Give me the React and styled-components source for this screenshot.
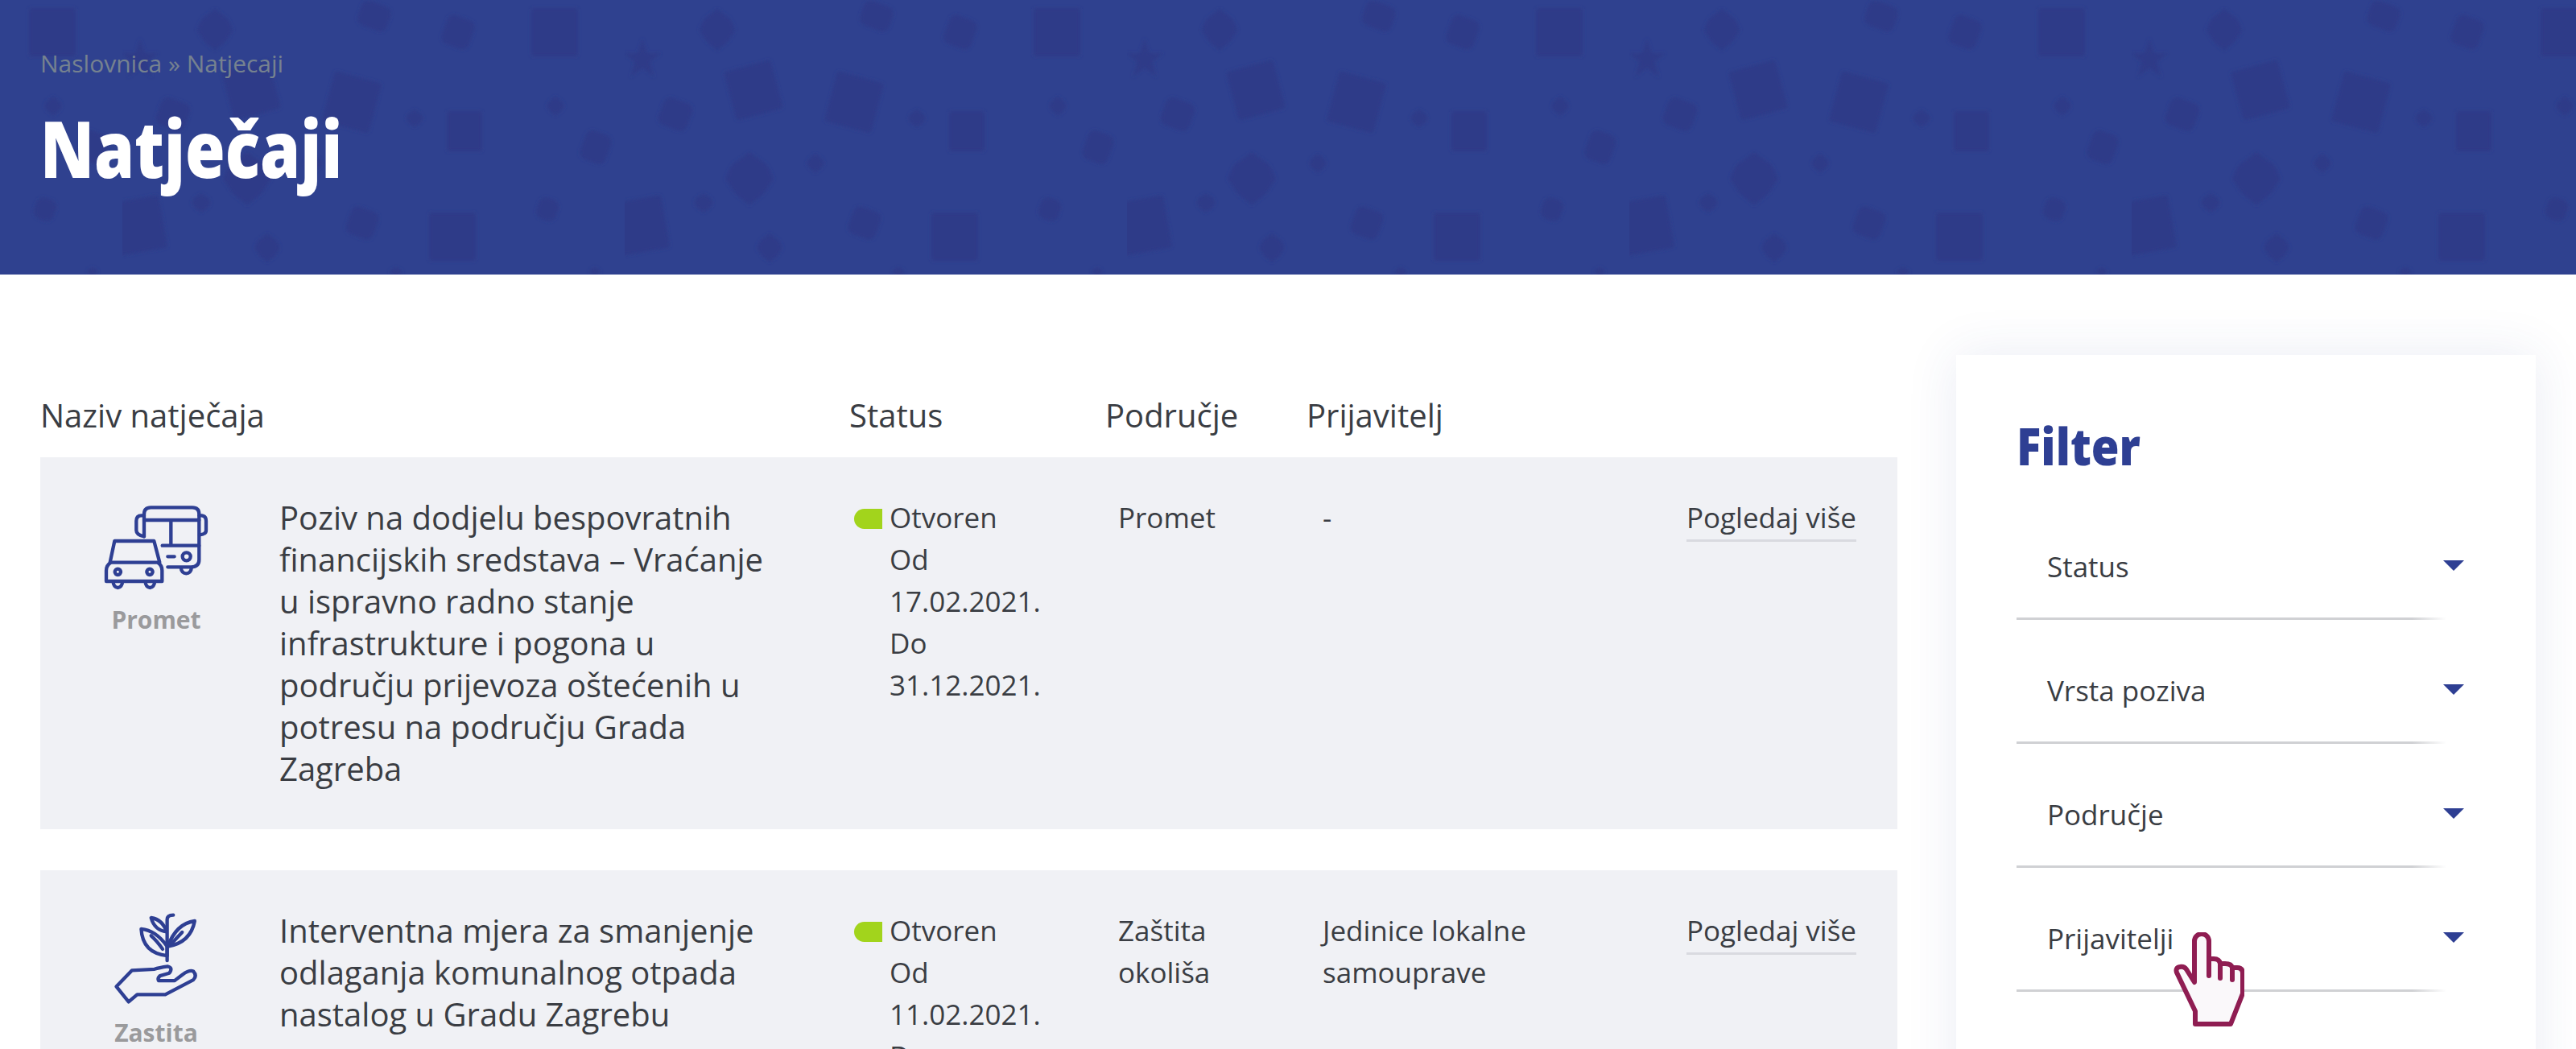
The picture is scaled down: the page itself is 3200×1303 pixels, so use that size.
import styled, { createGlobalStyle } from 'styled-components'

const GlobalStyle = createGlobalStyle`
	* {
		box-sizing: border-box;
	}
	html,
	body {
		margin: 0;
		height: 1303px;
		overflow: hidden;
		background: #fff;
		font-family: 'Open Sans', sans-serif;
		color: #3a3d43;
	}
`

const Hero = styled.header`
	position: relative;
	height: 341px;
	padding: 56px 50px 0;
	background: #2f418f;
	overflow: hidden;
`

const HeroPattern = styled.svg`
	position: absolute;
	inset: 0;
	width: 100%;
	height: 100%;
`

const Breadcrumb = styled.div`
	position: relative;
	font-size: 30px;
	line-height: 46px;
	color: #76828f;
`

const HeroTitle = styled.h1`
	position: relative;
	margin: 26px 0 0;
	font-family: 'Open Sans', sans-serif;
	font-size: 98px;
	line-height: 110px;
	font-weight: 800;
	color: #fff;
	transform: scaleX(0.82);
	transform-origin: left center;
`

const Main = styled.main`
	display: flex;
	gap: 73px;
	padding: 100px 50px 0;
`

const TableArea = styled.section`
	width: 2307px;
	flex: none;
	padding-top: 49px;
`

const TableHead = styled.div`
	display: grid;
	grid-template-columns: 1005px 318px 250px 1fr;
	height: 78px;
	font-size: 40px;
	line-height: 52px;
`

const Row = styled.article`
	display: grid;
	grid-template-columns: 297px 714px 328px 254px 330px 1fr;
	padding: 49px 51px 49px 0;
	margin-bottom: 51px;
	background: #f0f1f5;
	font-size: 35px;
	line-height: 52px;
`

const Category = styled.div`
	margin-top: 10px;
	padding-right: 9px;
	text-align: center;
`

const CategoryIcon = styled.svg`
	display: block;
	margin: 0 auto;
	width: ${p => p.$w}px;
	height: 106px;
	overflow: visible;
	fill: none;
	stroke: #2e3f93;
	stroke-width: 13;
	stroke-linecap: round;
	stroke-linejoin: round;
`

const CategoryName = styled.div`
	width: 200px;
	margin: 19px auto 0;
	font-size: 30px;
	line-height: 36px;
	font-weight: 700;
	color: #9a9a9c;
`

const RowTitle = styled.h2`
	margin: 0;
	max-width: 620px;
	font-size: 40px;
	line-height: 52px;
	font-weight: 400;
`

const StatusCell = styled.div`
	display: flex;
	gap: 9px;
`

const StatusDot = styled.span`
	flex: none;
	width: 35px;
	height: 25px;
	margin-top: 15px;
	border-radius: 14px 0 0 14px;
	background: #a2d41c;
`

const StatusText = styled.div`
	width: 200px;
`

const Cell = styled.div`
	padding-right: 36px;
`

const ActionCell = styled.div`
	text-align: right;
	white-space: nowrap;
`

const MoreLink = styled.a`
	display: inline-block;
	padding-bottom: 2px;
	border-bottom: 3px solid #d9dae0;
	line-height: 50px;
`

const FilterCard = styled.aside`
	position: relative;
	width: 720px;
	height: 1000px;
	flex: none;
	padding: 0 89px 0 75px;
	background: #fff;
	box-shadow: 0 0 60px rgba(46, 64, 143, 0.1);
`

const FilterTitle = styled.h3`
	height: 175px;
	margin: 0;
	padding: 68px 0 0;
	font-family: 'Open Sans', sans-serif;
	font-size: 64px;
	line-height: 90px;
	font-weight: 800;
	color: #2e3f93;
	transform: scaleX(0.88);
	transform-origin: left center;
`

const FilterRow = styled.div`
	position: relative;
	display: flex;
	justify-content: space-between;
	height: 154px;
	padding: 62px 0 0 38px;
	font-size: 35px;
	line-height: 52px;

	&::after {
		content: '';
		position: absolute;
		left: 0;
		bottom: 0;
		width: 534px;
		height: 3px;
		background: linear-gradient(90deg, #d0d1d4 92%, rgba(208, 209, 212, 0));
	}
`

const Caret = styled.span`
	width: 0;
	height: 0;
	margin-top: 18px;
	border-left: 13px solid transparent;
	border-right: 13px solid transparent;
	border-top: 13px solid #2e3f93;
`

const HandCursor = styled.svg`
	position: absolute;
	left: 270px;
	top: 717px;
	width: 88px;
	height: 118px;
	fill: #faf8fa;
	stroke: #8f1d52;
	stroke-width: 6;
	stroke-linejoin: round;
	stroke-linecap: round;
`

// tile-relative centres, read off the hero background
const shapes = [
	{ type: 'star', x: 22, y: 72, w: 46, h: 48 },
	{ type: 'diamond', x: 115, y: 37, w: 45, h: 52 },
	{ type: 'blob', x: 313, y: 20, w: 48, h: 40 },
	{ type: 'rect', x: 160, y: 112, w: 60, h: 62, r: -15 },
	{ type: 'rect', x: 285, y: 127, w: 60, h: 64, r: 15 },
	{ type: 'blob', x: 63, y: 142, w: 47, h: 45 },
	{ type: 'diamond', x: 155, y: 222, w: 60, h: 66 },
	{ type: 'diamond', x: 237, y: 203, w: 22, h: 24 },
	{ type: 'diamond', x: 98, y: 252, w: 24, h: 24 },
	{ type: 'rect', x: 21, y: 280, w: 60, h: 66, r: -10 },
	{ type: 'blob', x: 298, y: 277, w: 45, h: 45 },
	{ type: 'diamond', x: 180, y: 308, w: 32, h: 36 },
	{ type: 'blob', x: 417, y: 40, w: 45, h: 47 },
	{ type: 'rect', x: 537, y: 40, w: 58, h: 60 },
	{ type: 'diamond', x: 363, y: 147, w: 22, h: 22 },
	{ type: 'rect', x: 425, y: 163, w: 44, h: 50 },
	{ type: 'diamond', x: 538, y: 132, w: 22, h: 24 },
	{ type: 'blob', x: 588, y: 183, w: 42, h: 47 },
	{ type: 'rect', x: 410, y: 294, w: 58, h: 60 },
	{ type: 'blob', x: 528, y: 260, w: 32, h: 34 },
	{ type: 'diamond', x: 340, y: 338, w: 16, h: 12 },
	{ type: 'diamond', x: 587, y: 338, w: 14, h: 12 },
]

function PatternShape({ type, x, y, w, h, r = 0 }) {
	const transform = `translate(${x} ${y}) rotate(${r})`
	if (type === 'rect') {
		return <rect transform={transform} x={-w / 2} y={-h / 2} width={w} height={h} rx="3" />
	}
	if (type === 'star') {
		return (
			<polygon
				transform={transform}
				points={`0,${-h / 2} ${w * 0.13},${-h * 0.12} ${w / 2},${-h * 0.12} ${w * 0.2},${h * 0.1} ${w * 0.32},${h / 2} 0,${h * 0.25} ${-w * 0.32},${h / 2} ${-w * 0.2},${h * 0.1} ${-w / 2},${-h * 0.12} ${-w * 0.13},${-h * 0.12}`}
			/>
		)
	}
	if (type === 'diamond') {
		return (
			<polygon
				transform={transform}
				points={`0,${-h / 2} ${w * 0.36},${-h * 0.26} ${w / 2},0 ${w * 0.3},${h * 0.28} 0,${h / 2} ${-w * 0.3},${h * 0.28} ${-w / 2},0 ${-w * 0.36},${-h * 0.26}`}
			/>
		)
	}
	return <rect transform={`${transform} rotate(20)`} x={-w * 0.4} y={-h * 0.4} width={w * 0.8} height={h * 0.8} rx="9" />
}

function BusCarIcon() {
	return (
		<CategoryIcon $w={128} viewBox="208 140 384 318">
			<path d="M355 258V175Q355 150 380 150H535Q560 150 560 175V345Q560 372 530 372H443" />
			<path d="M355 197H560M455 197V292M423 292H560M443 333H468" />
			<path d="M355 180H345Q326 180 326 200V235Q326 252 355 258M560 180H570Q586 182 586 200V235Q586 250 562 252" />
			<circle cx="513" cy="333" r="15" />
			<path d="M493 377A19 19 0 0 0 531 377" />
			<path d="M228 355L245 275H392L413 355" />
			<path d="M232 355H405Q422 365 422 385V425H214V385Q214 365 232 355Z" />
			<circle cx="257" cy="390" r="11" />
			<circle cx="376" cy="390" r="11" />
			<path d="M240 428A17 21 0 0 0 274 428M360 428A17 21 0 0 0 394 428" />
		</CategoryIcon>
	)
}

function PlantHandIcon() {
	return (
		<CategoryIcon $w={104} viewBox="245 158 312 319">
			<path d="M442 318V165Q442 148 465 148" />
			<path d="M345 200Q400 205 442 265V300Q350 290 345 200Z" />
			<path d="M382 225Q405 245 425 275" />
			<path d="M382 158Q425 165 440 210Q395 205 382 158Z" />
			<path d="M545 170Q475 180 445 265Q530 250 545 170Z" />
			<path d="M498 212L458 255" />
			<path d="M445 340Q410 345 395 350L310 355L252 415L298 472L330 445H435L540 390Q555 375 540 358Q525 352 500 370Q480 385 470 393H410Q405 385 415 375L450 365Q465 345 445 340Z" />
		</CategoryIcon>
	)
}

const tenders = [
	{
		id: 1,
		icon: <BusCarIcon />,
		category: 'Promet',
		title:
			'Poziv na dodjelu bespovratnih financijskih sredstava – Vraćanje u ispravno radno stanje infrastrukture i pogona u području prijevoza oštećenih u potresu na području Grada Zagreba',
		from: '17.02.2021.',
		to: '31.12.2021.',
		area: 'Promet',
		applicant: '-',
	},
	{
		id: 2,
		icon: <PlantHandIcon />,
		category: 'Zastita okoliša',
		title:
			'Interventna mjera za smanjenje odlaganja komunalnog otpada nastalog u Gradu Zagrebu',
		from: '11.02.2021.',
		to: '31.12.2021.',
		area: 'Zaštita okoliša',
		applicant: 'Jedinice lokalne samouprave',
	},
]

const filters = ['Status', 'Vrsta poziva', 'Područje', 'Prijavitelji']

export default function App() {
	return (
		<>
			<GlobalStyle />
			<Hero>
				<HeroPattern aria-hidden="true">
					<defs>
						<filter id="hero-soften">
							<feGaussianBlur stdDeviation="2" />
						</filter>
						<pattern id="hero-tile" x="1400" y="0" width="624" height="341" patternUnits="userSpaceOnUse">
							<g fill="#2d3b88" filter="url(#hero-soften)">
								{shapes.map(shape => (
									<PatternShape key={`${shape.x}-${shape.y}`} {...shape} />
								))}
							</g>
						</pattern>
					</defs>
					<rect width="100%" height="100%" fill="url(#hero-tile)" />
				</HeroPattern>
				<Breadcrumb>Naslovnica » Natjecaji</Breadcrumb>
				<HeroTitle>Natječaji</HeroTitle>
			</Hero>
			<Main>
				<TableArea>
					<TableHead>
						<span>Naziv natječaja</span>
						<span>Status</span>
						<span>Područje</span>
						<span>Prijavitelj</span>
					</TableHead>
					{tenders.map(tender => (
						<Row key={tender.id}>
							<Category>
								{tender.icon}
								<CategoryName>{tender.category}</CategoryName>
							</Category>
							<RowTitle>{tender.title}</RowTitle>
							<StatusCell>
								<StatusDot />
								<StatusText>
									<div>Otvoren</div>
									Od {tender.from} Do {tender.to}
								</StatusText>
							</StatusCell>
							<Cell>{tender.area}</Cell>
							<Cell>{tender.applicant}</Cell>
							<ActionCell>
								<MoreLink>Pogledaj više</MoreLink>
							</ActionCell>
						</Row>
					))}
				</TableArea>
				<FilterCard>
					<FilterTitle>Filter</FilterTitle>
					{filters.map(name => (
						<FilterRow key={name}>
							{name}
							<Caret />
						</FilterRow>
					))}
					<HandCursor viewBox="0 0 88 118">
						<path d="M26 62V11A9 9 0 0 1 44 11V33H50Q57 33 58 39H64Q72 39 73 44H79Q86 44 86 51V76L71 114H27V98L4 50Q2 44 8 43Q13 42 16 46Z" />
						<path d="M44 33V54M58 39V57M73 44V59" />
					</HandCursor>
				</FilterCard>
			</Main>
		</>
	)
}
